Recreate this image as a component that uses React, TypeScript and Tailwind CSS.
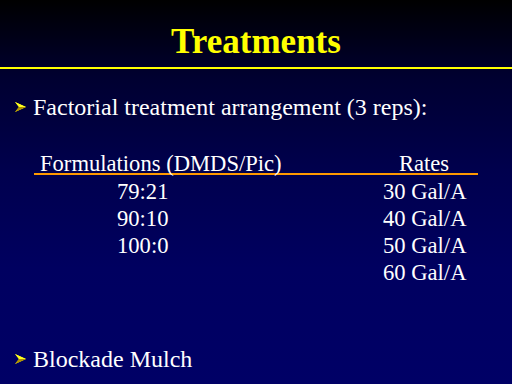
import React from "react";

function Arrow() {
  return (
    <svg width="11" height="10" viewBox="0 0 11 10" className="block">
      <polygon points="0,0 11,5 0,10 4,5" fill="#ffff00" />
      <polygon points="0,10 11,5 4,5" fill="#b09000" />
      <polygon points="0,0 11,5 4,5" fill="#ffff20" />
    </svg>
  );
}

function Bullet({ children }: { children: React.ReactNode }) {
  return (
    <div className="flex items-start pl-[15px]">
      <div className="w-[18px] pt-[7px]">
        <Arrow />
      </div>
      <div className="text-[24px] leading-none text-white">{children}</div>
    </div>
  );
}

const rows: [string, string][] = [
  ["79:21", "30 Gal/A"],
  ["90:10", "40 Gal/A"],
  ["100:0", "50 Gal/A"],
  ["", "60 Gal/A"],
];

export default function App() {
  return (
    <div
      className="w-[512px] h-[384px] overflow-hidden bg-[linear-gradient(to_bottom,#000000_0%,#000030_20%,#00004e_45%,#000060_70%,#000066_100%)]"
      style={{ fontFamily: '"Liberation Serif", "Times New Roman", serif' }}
    >
      <div className="h-[67px] pt-[24px] text-center text-[35px] leading-none font-bold text-[#ffff00]">
        Treatments
      </div>
      <div className="h-[2px] bg-[#ffff00]" />
      <div className="mt-[26px]">
        <Bullet>Factorial treatment arrangement (3 reps):</Bullet>
      </div>
      <div className="mt-[34px] ml-[34px] w-[444px] text-white text-[22.6px]">
        <div className="flex h-[22px] border-b-2 border-[#ff9900] leading-none">
          <div className="pl-[6px] w-[349px] whitespace-nowrap">Formulations (DMDS/Pic)</div>
          <div className="w-[82px] text-center">Rates</div>
        </div>
        <div className="mt-[3px]">
          {rows.map(([a, b], i) => (
            <div key={i} className="flex h-[27px] leading-[27px]">
              <div className="pl-[83px] w-[349px]">{a}</div>
              <div className="w-[95px] whitespace-nowrap">{b}</div>
            </div>
          ))}
        </div>
      </div>
      <div className="mt-[61px]">
        <Bullet>Blockade Mulch</Bullet>
      </div>
    </div>
  );
}
